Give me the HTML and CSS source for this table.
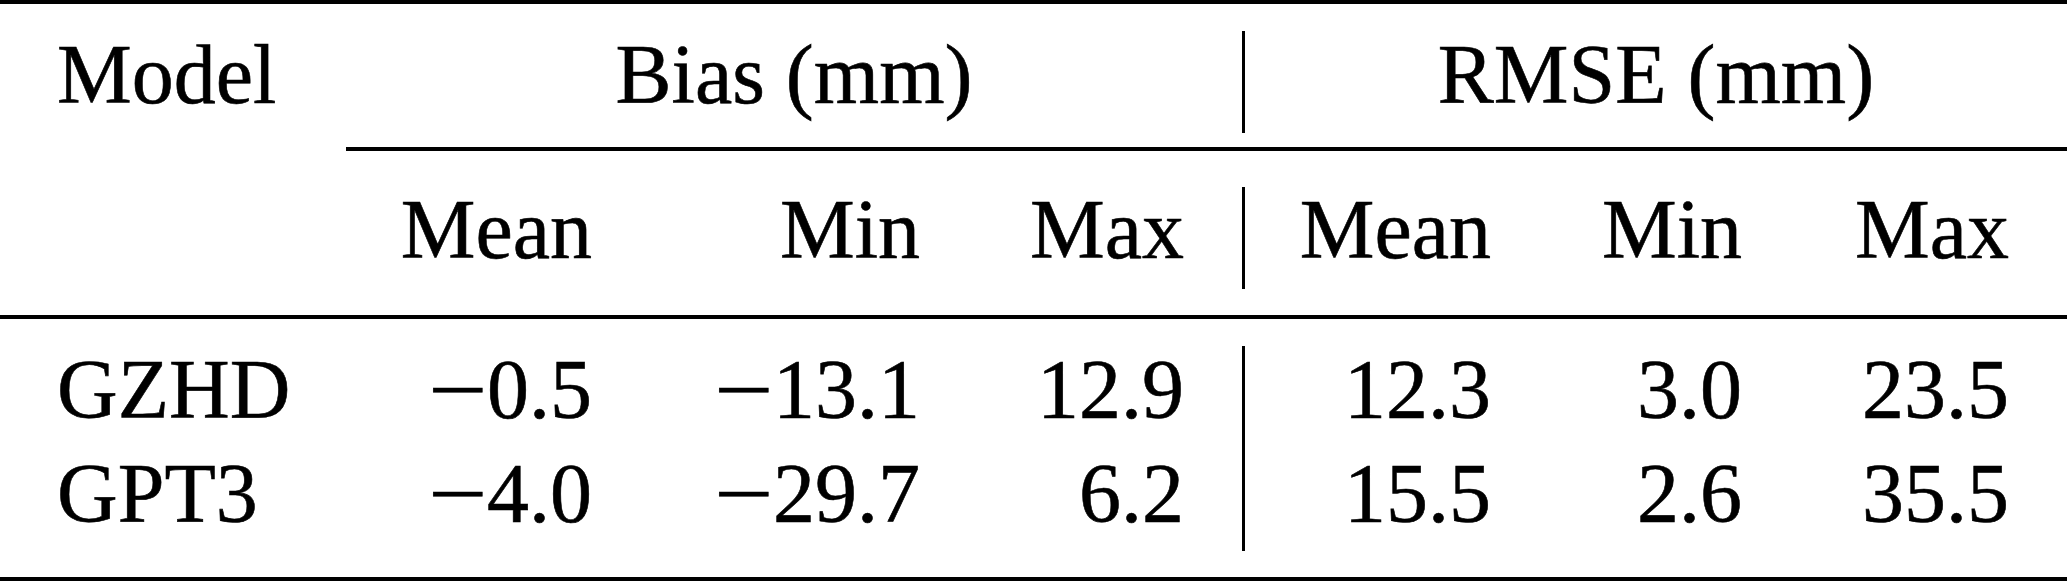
FILE: index.html
```html
<!DOCTYPE html>
<html lang="en">
<head>
    <meta charset="UTF-8">
    <meta name="viewport" content="width=device-width, initial-scale=1.0">
    <title>Bias and RMSE of ZHD models</title>
    <link rel="stylesheet" href="styles.css">
</head>
<body>
    <div class="results">
        <div class="rule rule-full"></div>

        <div class="cell head-top model">Model</div>
        <div class="cell head-top group">Bias (mm)</div>
        <div class="sep sep-top"></div>
        <div class="cell head-top group">RMSE (mm)</div>

        <div class="rule rule-mid"></div>

        <div class="cell head-sub"></div>
        <div class="cell head-sub num">Mean</div>
        <div class="cell head-sub num">Min</div>
        <div class="cell head-sub num last">Max</div>
        <div class="sep sep-sub"></div>
        <div class="cell head-sub num">Mean</div>
        <div class="cell head-sub num">Min</div>
        <div class="cell head-sub num last">Max</div>

        <div class="rule rule-full"></div>

        <div class="cell row-one model">GZHD</div>
        <div class="cell row-one num"><span class="minus">&minus;</span>0.5</div>
        <div class="cell row-one num"><span class="minus">&minus;</span>13.1</div>
        <div class="cell row-one num last">12.9</div>
        <div class="sep sep-body"></div>
        <div class="cell row-one num">12.3</div>
        <div class="cell row-one num">3.0</div>
        <div class="cell row-one num last">23.5</div>

        <div class="cell row-two model">GPT3</div>
        <div class="cell row-two num"><span class="minus">&minus;</span>4.0</div>
        <div class="cell row-two num"><span class="minus">&minus;</span>29.7</div>
        <div class="cell row-two num last">6.2</div>
        <div class="cell row-two num">15.5</div>
        <div class="cell row-two num">2.6</div>
        <div class="cell row-two num last">35.5</div>

        <div class="rule rule-full"></div>
    </div>
</body>
</html>
```

FILE: styles.css
```css
body {
    font-family: "Liberation Serif", "Times New Roman", serif;
    background-color: #fff;
    color: #000;
    margin: 0;
    padding: 0;
}

.results {
    display: grid;
    width: 2067px;
    grid-template-columns: 346px 246px 328px 322px 3px 246px 251px 325px;
    grid-template-rows: 4px 143px 4px 164px 4px 113px 145px 4px;
    font-size: 84px;
    line-height: 84px;
}

.rule {
    background-color: #000;
}

.rule-full {
    grid-column: 1 / -1;
}

.rule-mid {
    grid-column: 2 / -1;
}

.cell {
    align-self: start;
    white-space: nowrap;
    -webkit-text-stroke: 0.6px #000;
}

.model {
    padding-left: 57px;
}

.group {
    grid-column: span 3;
    text-align: center;
}

.num {
    text-align: right;
}

.num.last {
    padding-right: 58px;
}

.head-top {
    padding-top: 29px;
}

.head-sub {
    padding-top: 37px;
}

.row-one {
    padding-top: 29px;
}

.row-two {
    padding-top: 20px;
}

.minus {
    display: inline-block;
    transform: scaleX(1.25);
    transform-origin: right center;
}

.sep {
    align-self: start;
    background-color: #000;
}

.sep-top {
    margin-top: 27px;
    height: 102px;
}

.sep-sub {
    margin-top: 36px;
    height: 102px;
}

.sep-body {
    grid-row: span 2;
    margin-top: 27px;
    height: 205px;
}
```
